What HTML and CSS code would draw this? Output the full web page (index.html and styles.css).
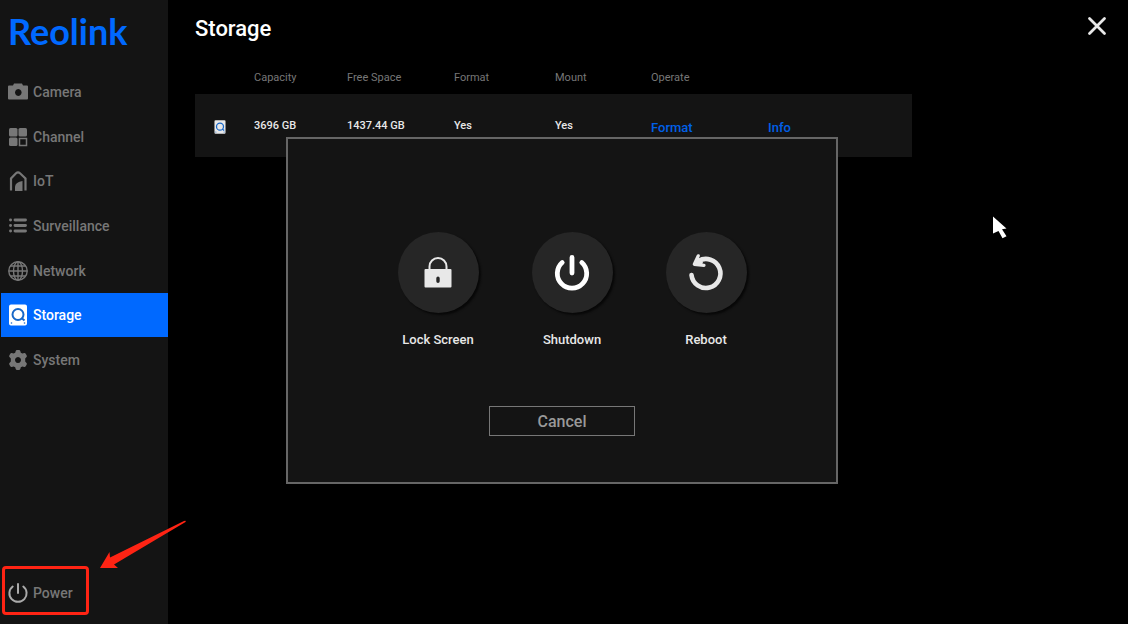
FILE: index.html
```html
<!DOCTYPE html>
<html lang="en">
<head>
<meta charset="utf-8">
<meta name="viewport" content="width=device-width, initial-scale=1">
<title>Storage</title>
<link rel="stylesheet" href="styles.css">
</head>
<body>
<svg class="defs" aria-hidden="true">
  <symbol id="disk" viewBox="0 0 18 22">
    <path fill="currentColor" d="M2 0.500H16a2 2 0 0 1 2 2V19.500a2 2 0 0 1-2 2H2a2 2 0 0 1-2-2V2.500a2 2 0 0 1 2-2z"/>
    <g class="disk-lens"><circle cx="9" cy="10.500" r="5.500"/><path d="M12.500 14 15.500 16.500"/></g>
    <circle class="disk-dot" cx="2.500" cy="19" r=".8"/><circle class="disk-dot" cx="15.500" cy="19" r=".8"/>
  </symbol>
</svg>
<div class="app">
  <aside class="sidebar">
    <div class="logo">Reolink</div>
    <nav class="menu">
      <a class="item" href="#"><svg class="icon" viewBox="0 0 20 20"><path fill="currentColor" fill-rule="evenodd" d="M6 1.500h8l1 2h4q1 0 1 1V16.500q0 1-1 1H1q-1 0-1-1V4.500q0-1 1-1h4zM10.300 7a3.300 3.500 0 1 0 .01 0z"/></svg><span>Camera</span></a>
      <a class="item" href="#"><svg class="icon" viewBox="0 0 20 20"><g fill="currentColor"><rect x="1" y="1" width="8.500" height="8.500" rx="1.500"/><rect x="10.500" y="1" width="8.500" height="8.500" rx="1.500"/><rect x="1" y="10.500" width="8.500" height="8.500" rx="1.500"/></g><rect x="11.500" y="11.500" width="7" height="7" fill="none" stroke="currentColor" stroke-width="1.500"/></svg><span>Channel</span></a>
      <a class="item" href="#"><svg class="icon" viewBox="0 0 20 20"><path fill="none" stroke="currentColor" stroke-width="2.200" d="M3 19.500V7.500L8 2.200q2-1.800 4 0l5.500 5.300V19.500"/><path fill="currentColor" d="M7 20v-4.500q.5-4.500 7.500-5.500V20z"/></svg><span>IoT</span></a>
      <a class="item" href="#"><svg class="icon" viewBox="0 0 20 20"><g stroke="currentColor" stroke-width="2.900" stroke-linecap="round"><path d="M7 4H17.500M7 9.500H17.500M7 15H17.500M2.500 4h.1M2.500 9.500h.1M2.500 15h.1"/></g></svg><span>Surveillance</span></a>
      <a class="item" href="#"><svg class="icon" viewBox="0 0 20 20"><g fill="none" stroke="currentColor" stroke-width="1.400"><circle cx="10" cy="10" r="9.200"/><ellipse cx="10" cy="10" rx="4.500" ry="9.200"/><path d="M10 .7V19.300M.7 10H19.300M2.500 5H17.500M2.500 15H17.500"/></g></svg><span>Network</span></a>
      <a class="item selected" href="#" aria-current="page"><svg class="icon icon-disk" viewBox="0 0 18 22"><use href="#disk"/></svg><span>Storage</span></a>
      <a class="item" href="#"><svg class="icon" viewBox="0 0 20 20"><path fill="currentColor" fill-rule="evenodd" d="M7.700 1Q8 0 9 0h2q1 0 1.300 1l.5 1.700 1.600.9 1.800-.5q1-.2 1.500.6l1 1.700q.5 1-.2 1.700L17.200 8.500v3l1.300 1.400q.7.700.2 1.700l-1 1.700q-.5.800-1.500.6l-1.800-.5-1.600.9-.5 1.700q-.3 1-1.300 1H9q-1 0-1.300-1l-.5-1.700-1.600-.9-1.800.5q-1 .2-1.500-.6l-1-1.700q-.5-1 .2-1.700l1.300-1.400v-3L1.500 7.100q-.7-.7-.2-1.700l1-1.700q.5-.8 1.500-.6l1.800.5 1.600-.9zM10 7a3 3 0 1 0 .01 0z"/></svg><span>System</span></a>
    </nav>
    <div class="power">
      <button class="power-button" type="button"><svg class="icon" viewBox="0 0 20 20"><path fill="none" stroke="currentColor" stroke-width="2" stroke-linecap="round" d="M10 1V10M4.700 3.500A8.600 8.600 0 1 0 15.300 3.500"/></svg><span>Power</span></button>
      <svg class="arrow" viewBox="0 0 90 52" aria-hidden="true"><path fill="#ff2414" d="M2 50 11.500 34l.5 5.500L86 3q2.500-.7 1.500 1L16 46.500l4 3.500z"/></svg>
    </div>
  </aside>
  <main class="main">
    <header class="header">
      <h1 class="title">Storage</h1>
      <button class="close" type="button" aria-label="Close"><svg viewBox="0 0 20 20"><path stroke="currentColor" stroke-width="2.800" stroke-linecap="round" d="M2.500 2.500 17.500 17.500M17.500 2.500 2.500 17.500"/></svg></button>
    </header>
    <table class="disks">
      <colgroup><col class="c-icon"><col class="c-capacity"><col class="c-free"><col class="c-format"><col class="c-mount"><col class="c-operate"><col></colgroup>
      <thead><tr><th></th><th>Capacity</th><th>Free Space</th><th>Format</th><th>Mount</th><th colspan="2">Operate</th></tr></thead>
      <tbody><tr><td class="disk-cell"><svg viewBox="0 0 18 22"><use href="#disk"/></svg></td><td>3696 GB</td><td>1437.44 GB</td><td>Yes</td><td>Yes</td><td class="action"><a href="#">Format</a></td><td class="action"><a href="#">Info</a></td></tr></tbody>
    </table>
  </main>
</div>
<div class="overlay">
  <section class="dialog" role="dialog" aria-label="Power">
    <div class="choices">
      <button class="choice" type="button"><span class="disc"><svg viewBox="0 0 40 40"><path fill="none" stroke="#e8e8e8" stroke-width="2" d="M11.500 17V13.500a8.500 8.500 0 0 1 17 0V17"/><path fill="#e8e8e8" fill-rule="evenodd" d="M7.500 16h25q1 0 1 1V33.500q0 1-1 1h-25q-1 0-1-1V17q0-1 1-1zM20 23.500q-1.700 0-1.700 1.700v3q0 1.700 1.700 1.700t1.700-1.700v-3q0-1.700-1.700-1.700z"/></svg></span><span>Lock Screen</span></button>
      <button class="choice" type="button"><span class="disc"><svg viewBox="0 0 40 40"><path fill="none" stroke="#fff" stroke-width="4.800" stroke-linecap="round" d="M20 4.500V20M10.200 9.500A14.700 14.700 0 1 0 29.800 9.500"/></svg></span><span>Shutdown</span></button>
      <button class="choice" type="button"><span class="disc"><svg viewBox="0 0 40 40"><g fill="none" stroke="#e8e8e8" stroke-linecap="round"><path stroke-width="4.600" d="M5.500 22A14.500 14.500 0 1 0 12.500 8"/><path stroke-width="3.200" stroke-linejoin="round" d="M12.300 2.800 8.300 11.300 18 12.400"/></g><path fill="#e8e8e8" d="M12 4 8.300 11.500 16 12l1-3z"/></svg></span><span>Reboot</span></button>
    </div>
    <button class="cancel" type="button">Cancel</button>
  </section>
</div>
<svg class="pointer" viewBox="0 0 16 24" aria-hidden="true"><path fill="#fff" d="M1 .5 14.500 12.500l-4.500.8 4.500 7-4 2L6.500 15 1 17.500z"/></svg>
</body>
</html>
```
FILE: styles.css
```css
* { box-sizing: border-box; }
body {
  margin: 0;
  background: #000;
  color: #e8e8e8;
  font-family: Roboto, "Liberation Sans", sans-serif;
  font-size: 14px;
  font-weight: 500;
}
button { font: inherit; color: inherit; background: none; border: 0; padding: 0; cursor: pointer; }
a { color: inherit; text-decoration: none; }
svg { display: block; }
.defs { position: absolute; width: 0; height: 0; }

.app { display: flex; min-height: 100vh; }

.sidebar {
  flex: 0 0 168px;
  display: flex;
  flex-direction: column;
  padding-bottom: 9px;
  background: #141414;
  color: #777;
}
.logo {
  height: 69px;
  padding: 8px 0 0 8px;
  color: #0069ff;
  font: 700 36px/46px Lato, sans-serif;
}
.menu { display: grid; grid-auto-rows: 1fr; height: 313px; padding-left: 1px; }
.item { display: flex; align-items: center; gap: 5px; padding: 1px 0 0 7px; }
.item.selected { background: #0069ff; color: #fff; }
.icon { width: 20px; height: 20px; flex: none; }
.icon-disk { height: 22px; }
.disk-lens { fill: none; stroke: #1767c8; stroke-width: 2; }
.disk-dot { fill: #1767c8; }

.power { position: relative; width: 87px; margin: auto 0 0 2px; }
.power-button {
  display: flex;
  align-items: center;
  gap: 5px;
  width: 100%;
  height: 49px;
  padding: 4px 0 0 3px;
  border: 3px solid #ff2414;
  border-radius: 4px;
}
.power-button .icon { color: #aaa; }
.arrow { position: absolute; left: 96px; bottom: 45px; width: 90px; height: 52px; }

.main { flex: 1; min-width: 0; padding: 0 21px 0 27px; }
.header { display: flex; justify-content: space-between; align-items: flex-start; padding-top: 16px; }
.title { margin: 0; font-size: 22px; font-weight: 500; line-height: 26px; color: #fff; }
.close svg { width: 20px; height: 20px; }

.disks {
  width: 100%;
  max-width: 717px;
  margin-top: 18px;
  border-collapse: collapse;
  table-layout: fixed;
  text-align: left;
  font-size: 11px;
}
.c-icon { width: 59px; }
.c-capacity { width: 93px; }
.c-free { width: 107px; }
.c-format { width: 101px; }
.c-mount { width: 96px; }
.c-operate { width: 117px; }
.disks th { height: 34px; padding: 0; font-weight: 400; color: #777; }
.disks tbody { background: #141414; }
.disks td { height: 63px; padding: 0; }
.disks .action { padding-top: 4px; font-size: 13px; color: #0060e8; }
.disk-cell svg { width: 12px; height: 14px; margin: 3px 0 0 19px; }
.disk-cell .disk-lens { stroke: #333; }
.disk-cell .disk-dot { fill: #fff; }

.overlay {
  position: fixed;
  inset: 0;
  display: grid;
  place-items: center;
  padding: 0 4px 3px 0;
}
.dialog {
  display: flex;
  flex-direction: column;
  align-items: center;
  width: 552px;
  padding: 93px 0 46px;
  background: #141414;
  border: 2px solid #666;
}
.choices { display: flex; gap: 34px; padding-left: 20px; }
.choice {
  display: flex;
  flex-direction: column;
  align-items: center;
  gap: 18px;
  width: 100px;
  font-size: 13px;
  line-height: 18px;
}
.disc {
  display: grid;
  place-items: center;
  width: 81px;
  height: 81px;
  border-radius: 50%;
  background: #262626;
  box-shadow: 2px 2px 2px #080808;
}
.disc svg { width: 40px; height: 40px; }
.cancel {
  width: 146px;
  height: 30px;
  margin-top: 57px;
  border: 1px solid #777;
  color: #999;
  font-size: 16px;
}
.pointer { position: absolute; left: 992px; top: 216px; width: 16px; height: 24px; }
```
